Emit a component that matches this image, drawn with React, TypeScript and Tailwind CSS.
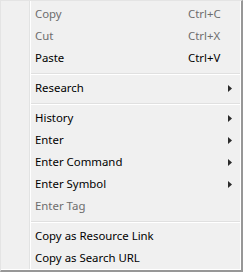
import React from 'react';

type Item =
  | { kind: 'sep' }
  | { kind: 'item'; label: string; shortcut?: string; disabled?: boolean; submenu?: boolean };

const ITEMS: Item[] = [
  { kind: 'item', label: 'Copy', shortcut: 'Ctrl+C', disabled: true },
  { kind: 'item', label: 'Cut', shortcut: 'Ctrl+X', disabled: true },
  { kind: 'item', label: 'Paste', shortcut: 'Ctrl+V' },
  { kind: 'sep' },
  { kind: 'item', label: 'Research', submenu: true },
  { kind: 'sep' },
  { kind: 'item', label: 'History', submenu: true },
  { kind: 'item', label: 'Enter', submenu: true },
  { kind: 'item', label: 'Enter Command', submenu: true },
  { kind: 'item', label: 'Enter Symbol', submenu: true },
  { kind: 'item', label: 'Enter Tag', disabled: true },
  { kind: 'sep' },
  { kind: 'item', label: 'Copy as Resource Link' },
  { kind: 'item', label: 'Copy as Search URL' },
];

const Arrow = () => (
  <svg width="4" height="7" viewBox="0 0 4 7" className="block">
    <polygon points="0,0 4,3.5 0,7" fill="#2b2b2b" />
  </svg>
);

export default function App() {
  return (
    <div
      className="w-[243px] h-[272px] bg-[#f0f0f0] border-l border-t border-[#e4e4e4] border-r-2 border-b-2 border-r-[#979797] border-b-[#979797] text-[11.4px] select-none"
      style={{ fontFamily: '"Noto Sans", "Open Sans", sans-serif' }}
    >
      <div className="flex h-full border-r border-b border-white">
        {/* icon gutter */}
        <div className="w-[28px] shrink-0" />
        <div className="w-px bg-[#e2e3e3]" />
        <div className="w-px bg-white" />
        <div className="flex-1 pt-[2px]">
          {ITEMS.map((it, i) =>
            it.kind === 'sep' ? (
              <div key={i} className="h-[8px] pt-[4px]">
                <div className="h-px bg-[#e0e0e0]" />
                <div className="h-px bg-white" />
              </div>
            ) : (
              <div
                key={i}
                className={`relative flex items-center h-[22px] pl-[4px] ${
                  it.disabled ? 'text-[#6d6d6d]' : 'text-black'
                }`}
              >
                <span className="w-[153px] whitespace-nowrap">{it.label}</span>
                {it.shortcut && <span className="whitespace-nowrap">{it.shortcut}</span>}
                {it.submenu && (
                  <span className="absolute right-[8px] top-[8px]">
                    <Arrow />
                  </span>
                )}
              </div>
            )
          )}
        </div>
      </div>
    </div>
  );
}
